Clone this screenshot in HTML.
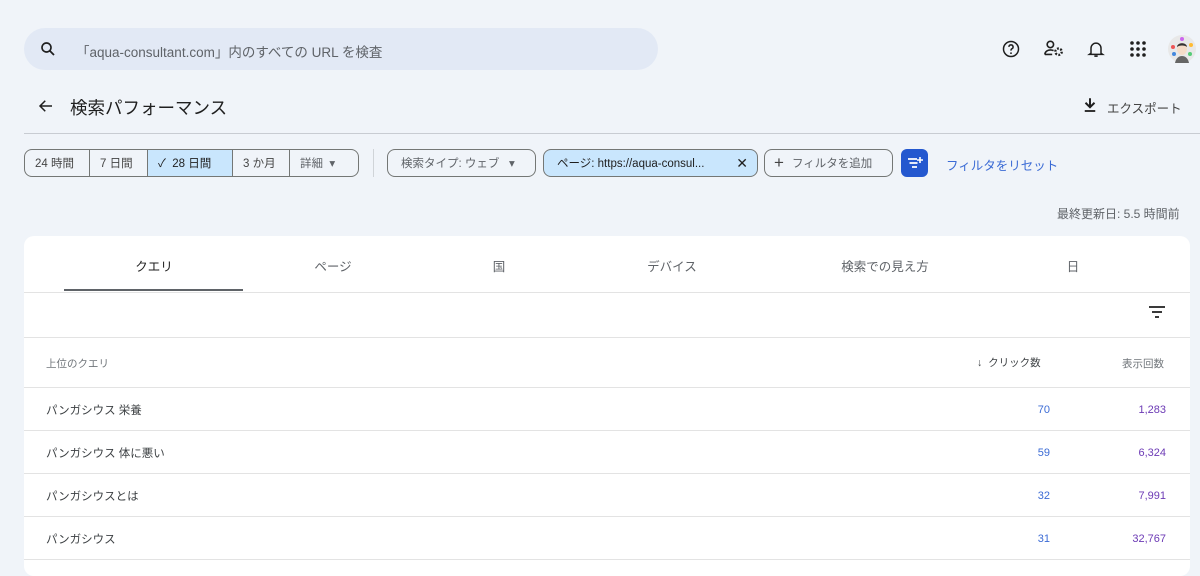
<!DOCTYPE html>
<html><head><meta charset="utf-8"><style>
*{box-sizing:border-box;margin:0;padding:0}
body{width:1200px;height:567px;overflow:hidden;background:#f0f4f9;font-family:"Liberation Sans","Noto Sans CJK JP",sans-serif;color:#1f1f1f;position:relative}
.abs{position:absolute}
.search{left:24px;top:28px;width:634px;height:42px;border-radius:21px;background:#e2e9f5}
.search span{position:absolute;left:52px;top:13px;font-size:13.5px;color:#5f6368}
.btn{position:absolute;top:149px;height:28px;border:1px solid #747775;border-radius:8px;font-size:11.5px;color:#444;display:flex;align-items:center}
.seg{display:flex;height:100%;align-items:center;padding:0 10px;border-right:1px solid #747775}
.seg:last-child{border-right:none}
.card{left:24px;top:236px;width:1166px;height:340px;background:#fff;border-radius:10px}
.tab{position:absolute;top:20px;font-size:12.5px;color:#5f6368;transform:translateX(-50%)}
.line{position:absolute;left:0;width:1166px;height:1px;background:#e3e3e3}
.row{position:absolute;left:22px;font-size:11.5px;color:#3c4043}
.num{position:absolute;font-size:11px;text-align:right}
</style></head><body>
<div class="abs search">
<svg class="abs" style="left:15px;top:12px" width="18" height="18" viewBox="0 0 24 24"><circle cx="10" cy="10" r="6" fill="none" stroke="#1f1f1f" stroke-width="2.2"/><path d="M14.5 14.5L20 20" stroke="#1f1f1f" stroke-width="2.4"/></svg>
<span>「aqua-consultant.com」内のすべての URL を検査</span></div>
<svg class="abs" style="left:1001px;top:39px" width="20" height="20" viewBox="0 0 24 24"><circle cx="12" cy="12" r="9" fill="none" stroke="#1f1f1f" stroke-width="1.8"/><path d="M9.5 9.5a2.5 2.5 0 1 1 3.5 2.3c-.7.4-1 .9-1 1.7v.5" fill="none" stroke="#1f1f1f" stroke-width="1.8"/><circle cx="12" cy="17" r="1.1" fill="#1f1f1f"/></svg>
<svg class="abs" style="left:1043px;top:39px" width="22" height="20" viewBox="0 0 24 22"><circle cx="8" cy="6" r="3.5" fill="none" stroke="#1f1f1f" stroke-width="1.8"/><path d="M2 17c0-3 3-5 6-5 1.5 0 2.5.3 3.5.8M2 17h8" fill="none" stroke="#1f1f1f" stroke-width="1.8"/><circle cx="17" cy="14" r="3.5" fill="none" stroke="#1f1f1f" stroke-width="2.6" stroke-dasharray="2 1.6"/></svg>
<svg class="abs" style="left:1086px;top:39px" width="20" height="20" viewBox="0 0 24 24"><path d="M6 17V11a6 6 0 0 1 12 0v6l2 1.5H4z" fill="none" stroke="#1f1f1f" stroke-width="1.8"/><path d="M10 20.5h4" stroke="#1f1f1f" stroke-width="2"/></svg>
<svg class="abs" style="left:1130px;top:41px" width="16" height="16" viewBox="0 0 16 16" fill="#1f1f1f"><circle cx="2" cy="2" r="1.8"/><circle cx="8" cy="2" r="1.8"/><circle cx="14" cy="2" r="1.8"/><circle cx="2" cy="8" r="1.8"/><circle cx="8" cy="8" r="1.8"/><circle cx="14" cy="8" r="1.8"/><circle cx="2" cy="14" r="1.8"/><circle cx="8" cy="14" r="1.8"/><circle cx="14" cy="14" r="1.8"/></svg>
<svg class="abs" style="left:1168px;top:35px" width="28" height="28" viewBox="0 0 28 28"><circle cx="14" cy="14" r="14" fill="#e8e8e8"/><circle cx="5" cy="12" r="2" fill="#e55"/><circle cx="23" cy="10" r="2" fill="#fb3"/><circle cx="6" cy="19" r="2" fill="#48d"/><circle cx="22" cy="19" r="2" fill="#5c7"/><circle cx="14" cy="4" r="2" fill="#c6e"/><path d="M7 28c1-5 4-7 7-7s6 2 7 7z" fill="#666"/><ellipse cx="14" cy="14" rx="5" ry="6" fill="#f4dcc8"/><path d="M9 12c0-5 10-5 10 0-2-2-8-2-10 0z" fill="#333"/></svg>
<svg class="abs" style="left:37px;top:97px" width="18" height="18" viewBox="0 0 24 24"><path d="M20 12H5M11 5l-7 7 7 7" fill="none" stroke="#1f1f1f" stroke-width="2"/></svg>
<div class="abs" style="left:70px;top:95px;font-size:17.5px;color:#1f1f1f">検索パフォーマンス</div>
<svg class="abs" style="left:1081px;top:96px" width="18" height="18" viewBox="0 0 24 24"><path d="M12 3v11M6 9l6 6 6-6" fill="none" stroke="#1f1f1f" stroke-width="2.6"/><path d="M5 20h14" stroke="#1f1f1f" stroke-width="2.4"/></svg>
<div class="abs" style="left:1107px;top:98px;font-size:12.5px;color:#444">エクスポート</div>
<div class="abs" style="left:24px;top:133px;width:1176px;height:1px;background:#c8ccd2"></div>
<div class="btn" style="left:24px;width:335px">
<div class="seg" style="width:65px">24 時間</div><div class="seg" style="width:58px">7 日間</div>
<div class="seg" style="width:85px;background:#c9e6fd;color:#1f1f1f">✓&nbsp; 28 日間</div>
<div class="seg" style="width:57px">3 か月</div><div class="seg" style="color:#5f6368">詳細 &nbsp;▾</div></div>
<div class="abs" style="left:373px;top:149px;width:1px;height:28px;background:#d0d4d8"></div>
<div class="btn" style="left:387px;width:149px;padding-left:13px;color:#5f6368">検索タイプ: ウェブ &nbsp;&nbsp;▾</div>
<div class="btn" style="left:543px;width:215px;padding-left:13px;background:#c9e6fd;color:#1f1f1f">ページ: https://aqua-consul... <span style="position:absolute;right:9px;font-size:14px">✕</span></div>
<div class="btn" style="left:764px;width:129px;padding-left:9px;color:#5f6368"><span style="font-size:17px;margin-right:8px;color:#444">+</span>フィルタを追加</div>
<div class="abs" style="left:901px;top:149px;width:27px;height:28px;border-radius:6px;background:#2458cf"><svg width="27" height="28" viewBox="0 0 27 28"><path d="M7 10h9M8.5 14h8M11 18h5" stroke="#fff" stroke-width="1.8"/><path d="M19 8v6M16 11h6" stroke="#fff" stroke-width="1.6"/></svg></div>
<div class="abs" style="left:946px;top:155px;font-size:12.5px;color:#3b6bd5">フィルタをリセット</div>
<div class="abs" style="left:1057px;top:205px;font-size:12px;color:#5f6368">最終更新日: 5.5 時間前</div>
<div class="abs card">
<div class="tab" style="left:130px;color:#1f1f1f">クエリ</div>
<div class="tab" style="left:309px">ページ</div>
<div class="tab" style="left:475px">国</div>
<div class="tab" style="left:648px">デバイス</div>
<div class="tab" style="left:861px">検索での見え方</div>
<div class="tab" style="left:1049px">日</div>
<div class="abs" style="left:40px;top:53px;width:179px;height:2px;background:#5f6368"></div>
<div class="line" style="top:56px"></div>
<svg class="abs" style="left:1124px;top:68px" width="18" height="16" viewBox="0 0 18 16"><path d="M1 3h16M4 8h10M7 13h4" stroke="#1f1f1f" stroke-width="1.8"/></svg>
<div class="line" style="top:101px"></div>
<div class="row" style="top:120px;font-size:10.5px;color:#70757a">上位のクエリ</div>
<div class="num" style="left:953px;top:119px;color:#3c4043;font-size:10.5px">↓ &nbsp;クリック数</div>
<div class="num" style="left:1098px;top:120px;color:#70757a;font-size:10.5px">表示回数</div>
<div class="line" style="top:151px"></div>
<div class="row" style="top:166px">パンガシウス 栄養</div>
<div class="num" style="right:140px;top:168px;color:#3b6bd5">70</div><div class="num" style="right:24px;top:168px;color:#6c3ab5">1,283</div>
<div class="line" style="top:194px"></div>
<div class="row" style="top:209px">パンガシウス 体に悪い</div>
<div class="num" style="right:140px;top:211px;color:#3b6bd5">59</div><div class="num" style="right:24px;top:211px;color:#6c3ab5">6,324</div>
<div class="line" style="top:237px"></div>
<div class="row" style="top:252px">パンガシウスとは</div>
<div class="num" style="right:140px;top:254px;color:#3b6bd5">32</div><div class="num" style="right:24px;top:254px;color:#6c3ab5">7,991</div>
<div class="line" style="top:280px"></div>
<div class="row" style="top:295px">パンガシウス</div>
<div class="num" style="right:140px;top:297px;color:#3b6bd5">31</div><div class="num" style="right:24px;top:297px;color:#6c3ab5">32,767</div>
<div class="line" style="top:323px"></div>
</div>
</body></html>
